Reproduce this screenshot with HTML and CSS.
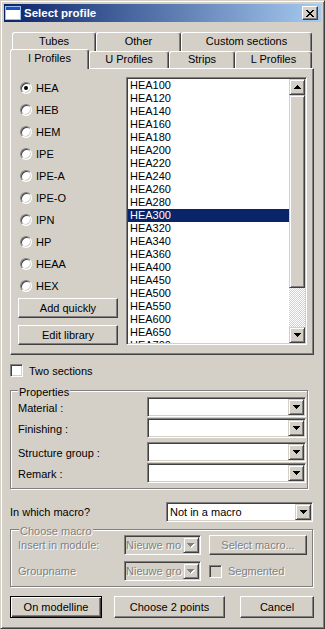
FILE: index.html
```html
<!DOCTYPE html>
<html lang="en">
<head>
  <meta charset="UTF-8" />
  <meta name="viewport" content="width=device-width, initial-scale=1.0"/>
  <title>Select profile</title>
  <link rel="stylesheet" href="styles.css">
</head>
<body>

<div class="window">
  <div class="titlebar">
    <svg class="app-icon" width="16" height="16" viewBox="0 0 16 16">
      <rect x="0" y="1" width="16" height="14" fill="#fff"/>
      <rect x="0" y="1" width="16" height="4" fill="#1c4fc4"/>
      <rect x="0.5" y="1.5" width="15" height="13" fill="none" stroke="#9dbde8"/>
    </svg>
    <span class="title">Select profile</span>
    <span class="caption-btn">
      <svg width="8" height="7" viewBox="0 0 8 7"><path d="M0 0h2v1H0zM6 0h2v1H6zM1 1h2v1H1zM5 1h2v1H5zM2 2h4v1H2zM3 3h2v1H3zM2 4h4v1H2zM1 5h2v1H1zM5 5h2v1H5zM0 6h2v1H0zM6 6h2v1H6z" fill="#000"/></svg>
    </span>
  </div>

  <div class="client">
    <div class="tabrow tabrow-back">
      <div class="tab tab-tubes">Tubes</div>
      <div class="tab tab-other">Other</div>
      <div class="tab tab-custom">Custom sections</div>
    </div>
    <div class="tabrow tabrow-front">
      <div class="tab tab-iprof active">I Profiles</div>
      <div class="tab tab-uprof">U Profiles</div>
      <div class="tab tab-strips">Strips</div>
      <div class="tab tab-lprof">L Profiles</div>
    </div>

    <div class="panel">
      <div class="profile-types">
        <div class="radio-row"><span class="radio checked"></span>HEA</div>
        <div class="radio-row"><span class="radio"></span>HEB</div>
        <div class="radio-row"><span class="radio"></span>HEM</div>
        <div class="radio-row"><span class="radio"></span>IPE</div>
        <div class="radio-row"><span class="radio"></span>IPE-A</div>
        <div class="radio-row"><span class="radio"></span>IPE-O</div>
        <div class="radio-row"><span class="radio"></span>IPN</div>
        <div class="radio-row"><span class="radio"></span>HP</div>
        <div class="radio-row"><span class="radio"></span>HEAA</div>
        <div class="radio-row"><span class="radio"></span>HEX</div>
        <button class="btn btn-add">Add quickly</button>
        <button class="btn btn-edit">Edit library</button>
      </div>

      <div class="listbox">
        <ul class="items">
          <li>HEA100</li>
          <li>HEA120</li>
          <li>HEA140</li>
          <li>HEA160</li>
          <li>HEA180</li>
          <li>HEA200</li>
          <li>HEA220</li>
          <li>HEA240</li>
          <li>HEA260</li>
          <li>HEA280</li>
          <li class="selected">HEA300</li>
          <li>HEA320</li>
          <li>HEA340</li>
          <li>HEA360</li>
          <li>HEA400</li>
          <li>HEA450</li>
          <li>HEA500</li>
          <li>HEA550</li>
          <li>HEA600</li>
          <li>HEA650</li>
          <li>HEA700</li>
          <li>HEA800</li>
        </ul>
        <div class="vscroll">
          <div class="sbtn"><svg width="7" height="4" viewBox="0 0 7 4"><path d="M3 0h1v1h1v1h1v1h1v1H0V3h1V2h1V1h1z" fill="#000"/></svg></div>
          <div class="thumb"></div>
          <div class="track"></div>
          <div class="sbtn"><svg width="7" height="4" viewBox="0 0 7 4"><path d="M0 0h7v1H6v1H5v1H4v1H3V3H2V2H1V1H0z" fill="#000"/></svg></div>
        </div>
      </div>
    </div>

    <div class="check-row two-sections"><span class="checkbox"></span>Two sections</div>

    <div class="group properties">
      <div class="legend">Properties</div>
      <div class="prop-row first">
        <span class="prop-label">Material :</span>
        <div class="combo"><span class="combo-text"></span><span class="drop"><svg width="7" height="4" viewBox="0 0 7 4"><path d="M0 0h7v1H6v1H5v1H4v1H3V3H2V2H1V1H0z" fill="#000"/></svg></span></div>
      </div>
      <div class="prop-row">
        <span class="prop-label">Finishing :</span>
        <div class="combo"><span class="combo-text"></span><span class="drop"><svg width="7" height="4" viewBox="0 0 7 4"><path d="M0 0h7v1H6v1H5v1H4v1H3V3H2V2H1V1H0z" fill="#000"/></svg></span></div>
      </div>
      <div class="prop-row wide">
        <span class="prop-label">Structure group :</span>
        <div class="combo"><span class="combo-text"></span><span class="drop"><svg width="7" height="4" viewBox="0 0 7 4"><path d="M0 0h7v1H6v1H5v1H4v1H3V3H2V2H1V1H0z" fill="#000"/></svg></span></div>
      </div>
      <div class="prop-row">
        <span class="prop-label">Remark :</span>
        <div class="combo"><span class="combo-text"></span><span class="drop"><svg width="7" height="4" viewBox="0 0 7 4"><path d="M0 0h7v1H6v1H5v1H4v1H3V3H2V2H1V1H0z" fill="#000"/></svg></span></div>
      </div>
    </div>

    <div class="macro-row">
      <span>In which macro?</span>
      <div class="combo macro-combo"><span class="combo-text">Not in a macro</span><span class="drop"><svg width="7" height="4" viewBox="0 0 7 4"><path d="M0 0h7v1H6v1H5v1H4v1H3V3H2V2H1V1H0z" fill="#000"/></svg></span></div>
    </div>

    <div class="group choose-macro">
      <div class="legend disabled-text">Choose macro</div>
      <div class="cm-row first">
        <span class="cm-label disabled-text">Insert in module:</span>
        <div class="combo combo-disabled"><span class="combo-text disabled-text">Nieuwe mo</span><span class="drop"><svg width="8" height="5" viewBox="0 0 8 5"><path d="M1 1h7v1H7v1H6v1H5v1H4V4H3V3H2V2H1z" fill="#fff"/><path d="M0 0h7v1H6v1H5v1H4v1H3V3H2V2H1V1H0z" fill="#808080"/></svg></span></div>
        <button class="btn btn-select disabled-text">Select macro...</button>
      </div>
      <div class="cm-row second">
        <span class="cm-label disabled-text">Groupname</span>
        <div class="combo combo-disabled"><span class="combo-text disabled-text">Nieuwe gro</span><span class="drop"><svg width="8" height="5" viewBox="0 0 8 5"><path d="M1 1h7v1H7v1H6v1H5v1H4V4H3V3H2V2H1z" fill="#fff"/><path d="M0 0h7v1H6v1H5v1H4v1H3V3H2V2H1V1H0z" fill="#808080"/></svg></span></div>
        <div class="check-row segmented"><span class="checkbox checkbox-disabled"></span><span class="disabled-text">Segmented</span></div>
      </div>
    </div>

    <div class="actions">
      <button class="btn btn-default btn-model">On modelline</button>
      <button class="btn btn-points">Choose 2 points</button>
      <button class="btn btn-cancel">Cancel</button>
    </div>
  </div>
</div>

</body>
</html>
```

FILE: styles.css
```css
* {
  box-sizing: border-box;
}
body {
  margin: 0;
  font-family: "Liberation Sans", Arial, sans-serif;
  font-size: 11px;
  color: #000;
  background: #d4d0c8;
}
.window {
  width: 325px;
  height: 629px;
  padding: 3px;
  background: #d4d0c8;
  border: 1px solid;
  border-color: #d4d0c8 #404040 #404040 #d4d0c8;
  box-shadow: inset 1px 1px #fff, inset -1px -1px #808080;
  display: flex;
  flex-direction: column;
}

/* title bar */
.titlebar {
  height: 18px;
  flex: none;
  display: flex;
  align-items: center;
  padding: 0 3px 0 1px;
  background: linear-gradient(to right, #0a246a, #a6caf0);
  color: #fff;
}
.app-icon {
  flex: none;
}
.title {
  flex: 1;
  margin-left: 3px;
  font-weight: bold;
  font-size: 11.5px;
}
.caption-btn {
  width: 16px;
  height: 14px;
  display: flex;
  align-items: center;
  justify-content: center;
  background: #d4d0c8;
  border: 1px solid;
  border-color: #fff #404040 #404040 #fff;
  box-shadow: inset -1px -1px #808080;
}

.client {
  flex: 1;
  padding: 10px 7px 0 6px;
  display: flex;
  flex-direction: column;
}

/* tabs */
.tabrow {
  display: flex;
}
.tabrow-back {
  height: 19px;
  margin-left: 2px;
}
.tabrow-front {
  height: 17px;
  align-items: flex-end;
}
.tab {
  flex: none;
  text-align: center;
  white-space: nowrap;
  background: #d4d0c8;
  border: 1px solid;
  border-bottom: 0;
  border-color: #fff #404040 #404040 #fff;
  box-shadow: inset -1px 0 #808080;
  border-radius: 3px 3px 0 0;
}
.tabrow-back .tab {
  height: 19px;
  line-height: 17px;
}
.tabrow-front .tab {
  height: 17px;
  line-height: 15px;
}
.tabrow-front .tab.active {
  height: 20px;
  margin-bottom: -1px;
  padding-top: 1px;
  line-height: 14px;
  position: relative;
  z-index: 1;
}
.tab-tubes { width: 84px; }
.tab-other { width: 85px; }
.tab-custom { width: 131px; }
.tab-iprof { width: 79px; }
.tab-uprof { width: 80px; }
.tab-strips { width: 66px; }
.tab-lprof { width: 77px; }

.panel {
  height: 287px;
  flex: none;
  display: flex;
  gap: 8px;
  padding: 8px 6px 0 7px;
  border: 1px solid;
  border-color: #fff #404040 #404040 #fff;
  box-shadow: inset -1px -1px #808080;
}
.profile-types {
  width: 100px;
  display: flex;
  flex-direction: column;
}
.radio-row {
  height: 22px;
  display: flex;
  align-items: center;
  gap: 4px;
  padding-left: 2px;
}
.radio {
  width: 12px;
  height: 12px;
  flex: none;
  border-radius: 50%;
  background: #fff;
  border: 1px solid;
  border-color: #808080 #fff #fff #808080;
  box-shadow: inset 1px 1px #404040, inset -1px -1px #d4d0c8;
  display: flex;
  align-items: center;
  justify-content: center;
}
.radio.checked::after {
  content: "";
  width: 4px;
  height: 4px;
  border-radius: 50%;
  background: #000;
}

/* buttons */
.btn {
  font: inherit;
  color: #000;
  padding: 0;
  background: #d4d0c8;
  border: 1px solid;
  border-color: #fff #404040 #404040 #fff;
  box-shadow: inset -1px -1px #808080;
  white-space: nowrap;
}
.btn-add {
  height: 20px;
  margin-top: 1px;
}
.btn-edit {
  height: 20px;
  margin-top: 7px;
}
.btn-default {
  border-color: #000;
  box-shadow: inset 1px 1px #fff, inset -1px -1px #404040, inset -2px -2px #808080;
}

/* list */
.listbox {
  width: 181px;
  height: 268px;
  display: flex;
  padding: 1px;
  background: #fff;
  border: 1px solid;
  border-color: #808080 #fff #fff #808080;
  box-shadow: inset 1px 1px #404040, inset -1px -1px #d4d0c8;
}
.items {
  flex: 1;
  list-style: none;
  margin: 0;
  padding: 0;
  overflow: hidden;
}
.items li {
  height: 13px;
  line-height: 13px;
  padding-left: 2px;
  white-space: nowrap;
}
.items li.selected {
  background: #0a246a;
  color: #fff;
}
.vscroll {
  width: 16px;
  flex: none;
  display: flex;
  flex-direction: column;
}
.sbtn,
.thumb,
.drop {
  background: #d4d0c8;
  border: 1px solid;
  border-color: #d4d0c8 #404040 #404040 #d4d0c8;
  box-shadow: inset 1px 1px #fff, inset -1px -1px #808080;
}
.sbtn {
  height: 16px;
  flex: none;
  display: flex;
  align-items: center;
  justify-content: center;
}
.thumb {
  height: 193px;
  flex: none;
}
.track {
  flex: 1;
  background: repeating-conic-gradient(#fff 0 25%, #d4d0c8 0 50%) 0 0 / 2px 2px;
}

/* checkboxes */
.check-row {
  display: flex;
  align-items: center;
  gap: 6px;
  height: 13px;
}
.two-sections {
  margin-top: 9px;
}
.checkbox {
  width: 13px;
  height: 13px;
  flex: none;
  background: #fff;
  border: 1px solid;
  border-color: #808080 #fff #fff #808080;
  box-shadow: inset 1px 1px #404040, inset -1px -1px #d4d0c8;
}
.checkbox-disabled {
  background: #d4d0c8;
}

/* group boxes */
.group {
  flex: none;
  border: 1px solid #808080;
  box-shadow: inset 1px 1px #fff, 1px 1px #fff;
}
.legend {
  width: max-content;
  height: 6px;
  margin-top: -5px;
  padding: 0 1px;
  line-height: 13px;
  background: #d4d0c8;
  white-space: nowrap;
}
.properties {
  width: 298px;
  height: 99px;
  margin-top: 13px;
  padding: 0 1px 0 7px;
}
.prop-row {
  display: flex;
  align-items: center;
  height: 20px;
  margin-top: 1px;
}
.prop-row.first {
  margin-top: 5px;
}
.prop-row.wide {
  margin-top: 4px;
}
.prop-label {
  flex: 1;
  padding-top: 1px;
}

/* combos */
.combo {
  width: 159px;
  height: 20px;
  flex: none;
  display: flex;
  padding: 1px;
  background: #fff;
  border: 1px solid;
  border-color: #808080 #fff #fff #808080;
  box-shadow: inset 1px 1px #404040, inset -1px -1px #d4d0c8;
}
.combo-text {
  flex: 1;
  padding-left: 2px;
  line-height: 16px;
  overflow: hidden;
  white-space: nowrap;
}
.drop {
  width: 16px;
  height: 16px;
  flex: none;
  display: flex;
  align-items: center;
  justify-content: center;
}
.combo-disabled {
  width: 77px;
  background: #d4d0c8;
}
.combo-disabled .combo-text {
  padding-left: 0;
}

.macro-row {
  display: flex;
  align-items: center;
  justify-content: space-between;
  height: 20px;
  margin-top: 13px;
}
.macro-combo {
  width: 147px;
  margin-right: 1px;
}

.disabled-text {
  color: #808080;
  text-shadow: 1px 1px #fff;
}
.choose-macro {
  height: 58px;
  margin-top: 7px;
  margin-right: 1px;
  padding: 0 5px 0 7px;
}
.choose-macro .legend {
  margin-left: 1px;
}
.cm-row {
  display: flex;
  align-items: center;
  gap: 8px;
  height: 20px;
}
.cm-row.first {
  margin-top: 4px;
}
.cm-row.second {
  margin-top: 6px;
}
.cm-label {
  width: 98px;
}
.btn-select {
  width: 98px;
  height: 20px;
}

.actions {
  display: flex;
  height: 22px;
  margin-top: 9px;
}
.btn-model {
  width: 92px;
}
.btn-points {
  width: 111px;
  margin-left: 12px;
}
.btn-cancel {
  width: 74px;
  margin-left: 15px;
}
```
